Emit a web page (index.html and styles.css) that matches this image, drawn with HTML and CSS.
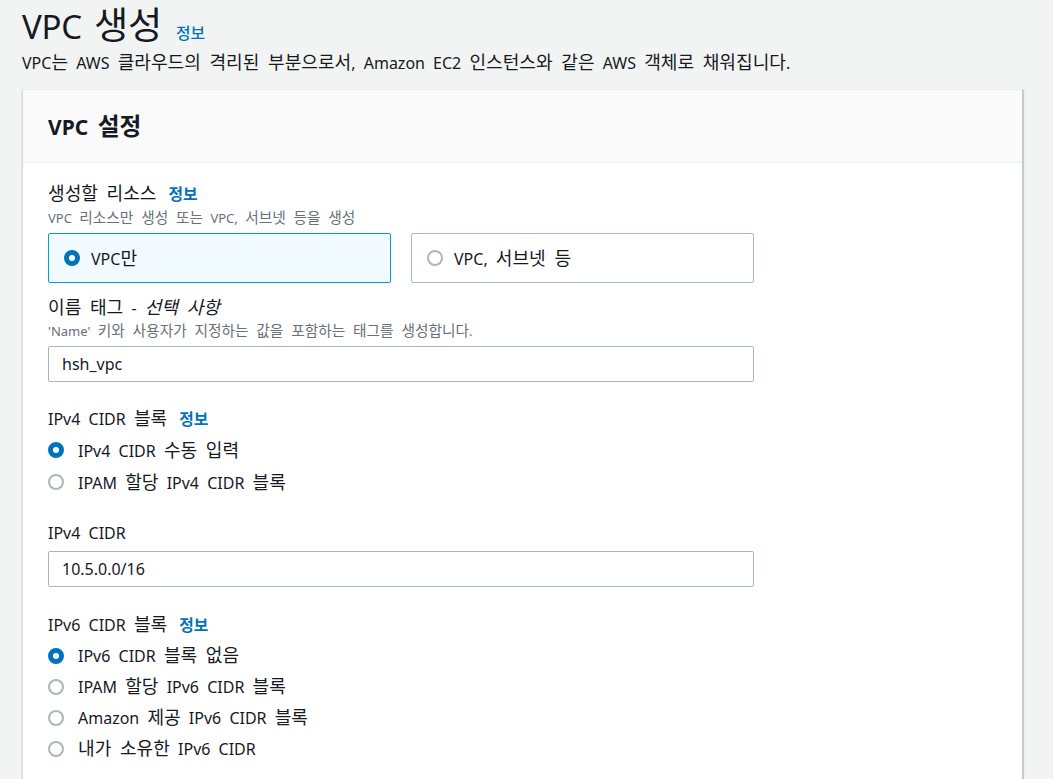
FILE: index.html
```html
<!DOCTYPE html>
<html lang="ko">
<head>
<meta charset="utf-8">
<link rel="stylesheet" href="styles.css">
</head>
<body>
<div class="page">
  <header class="page-head">
    <h1 class="title"><span>VPC <span class="k">생성</span></span> <a class="info info-title"><span class="k">정보</span></a></h1>
    <p class="subtitle">VPC<span class="k">는</span> AWS <span class="k">클라우드의 격리된 부분으로서</span>, Amazon EC2 <span class="k">인스턴스와 같은</span> AWS <span class="k">객체로 채워집니다</span>.</p>
  </header>
  <section class="card">
    <div class="card-head"><h2 class="card-title">VPC <span class="k">설정</span></h2></div>
    <div class="card-body">
      <div class="field">
        <div class="label"><span class="k">생성할 리소스</span> <a class="info"><span class="k">정보</span></a></div>
        <div class="desc">VPC <span class="k">리소스만 생성 또는</span> VPC, <span class="k">서브넷 등을 생성</span></div>
        <div class="tiles">
          <div class="tile selected"><span class="radio on"></span><span>VPC<span class="k">만</span></span></div>
          <div class="tile"><span class="radio"></span><span>VPC, <span class="k">서브넷 등</span></span></div>
        </div>
      </div>
      <div class="field f-name">
        <div class="label"><span class="k">이름 태그</span> - <i class="k">선택 사항</i></div>
        <div class="desc">'Name' <span class="k">키와 사용자가 지정하는 값을 포함하는 태그를 생성합니다</span>.</div>
        <div class="input">hsh_vpc</div>
      </div>
      <div class="field f-ipv4">
        <div class="label"><span>IPv4 CIDR <span class="k">블록</span></span> <a class="info"><span class="k">정보</span></a></div>
        <div class="radios">
          <div class="opt"><span class="radio on"></span><span>IPv4 CIDR <span class="k">수동 입력</span></span></div>
          <div class="opt"><span class="radio"></span><span>IPAM <span class="k">할당</span> IPv4 CIDR <span class="k">블록</span></span></div>
        </div>
      </div>
      <div class="field f-cidr">
        <div class="label">IPv4 CIDR</div>
        <div class="input">10.5.0.0/16</div>
      </div>
      <div class="field f-ipv6">
        <div class="label"><span>IPv6 CIDR <span class="k">블록</span></span> <a class="info"><span class="k">정보</span></a></div>
        <div class="radios r6">
          <div class="opt"><span class="radio on"></span><span>IPv6 CIDR <span class="k">블록 없음</span></span></div>
          <div class="opt"><span class="radio"></span><span>IPAM <span class="k">할당</span> IPv6 CIDR <span class="k">블록</span></span></div>
          <div class="opt"><span class="radio"></span><span>Amazon <span class="k">제공</span> IPv6 CIDR <span class="k">블록</span></span></div>
          <div class="opt"><span class="radio"></span><span><span class="k">내가 소유한</span> IPv6 CIDR</span></div>
        </div>
      </div>
    </div>
  </section>
</div>
</body>
</html>
```
FILE: styles.css
```css
* { box-sizing: border-box; }
html, body { margin: 0; padding: 0; }
body {
  background: #f2f3f3;
  color: #16191f;
  font-family: "Noto Sans", "Noto Sans CJK KR", sans-serif;
  word-spacing: 0.25em;
  overflow: hidden;
}
.k { font-size: 1.13em; }
.page { padding: 0 30px 0 22px; }
.page-head { padding-top: 2px; }
.title {
  margin: 0;
  height: 46px;
  font-size: 33px;
  font-weight: 400;
  line-height: 46px;
  display: flex;
  align-items: baseline;
  gap: 14px;
  letter-spacing: -0.3px;
}
.info {
  color: #0073bb;
  font-size: 14px;
  font-weight: 700;
  text-decoration: none;
  letter-spacing: 0;
}
.info-title { font-weight: 500; }
.subtitle {
  margin: 0;
  font-size: 16px;
  line-height: 28px;
  color: #16191f;
}
.card {
  margin-top: 12px;
  width: 1001px;
  background: #fff;
  border-left: 1px solid #d5dbdb;
  border-right: 1px solid #c8cccc;
  border-top: 1px solid #eaeded;
  box-shadow: 0 1px 1px rgba(0,28,36,0.3), 1px 1px 1px rgba(0,28,36,0.15);
  height: 720px;
}
.card-head {
  background: #fafafa;
  border-bottom: 1px solid #eaeded;
  height: 73px;
  padding: 0 25px;
  display: flex;
  align-items: center;
}
.card-title { margin: 0; font-size: 21px; font-weight: 700; line-height: 30px; }
.card-body { padding: 18px 25px 0; }
.label {
  font-size: 16px;
  line-height: 24px;
  display: flex;
  align-items: baseline;
  gap: 12px;
}
.label i { font-style: italic; }
.f-name .label { display: block; }
.desc {
  font-size: 13px;
  line-height: 18px;
  color: #687078;
  margin-top: 1px;
}
.tiles {
  display: grid;
  grid-template-columns: 343px 343px;
  gap: 20px;
  margin-top: 6px;
}
.tile {
  height: 50px;
  border: 1px solid #aab7b8;
  border-radius: 2px;
  display: flex;
  align-items: center;
  gap: 11px;
  padding-left: 15px;
  font-size: 16px;
  line-height: 24px;
}
.tile.selected { border-color: #00a1c9; background: #f1faff; }
.radio {
  width: 16px; height: 16px;
  border-radius: 50%;
  border: 2px solid #aab7b8;
  background: #fff;
  flex: none;
}
.radio.on { border: 5px solid #0073bb; }
.f-name { margin-top: 12px; }
.input {
  width: 706px;
  height: 36px;
  border: 1px solid #aab7b8;
  border-radius: 2px;
  margin-top: 6px;
  padding-left: 13px;
  display: flex;
  align-items: center;
  font-size: 16px;
}
.f-ipv4 { margin-top: 24px; }
.radios { display: flex; flex-direction: column; margin-top: 2px; }
.opt {
  height: 32px;
  display: flex;
  align-items: center;
  gap: 14px;
  font-size: 16px;
  line-height: 24px;
}
.r6 .opt { height: 31px; }
.f-cidr { margin-top: 23px; }
.f-ipv6 { margin-top: 25px; }
```
